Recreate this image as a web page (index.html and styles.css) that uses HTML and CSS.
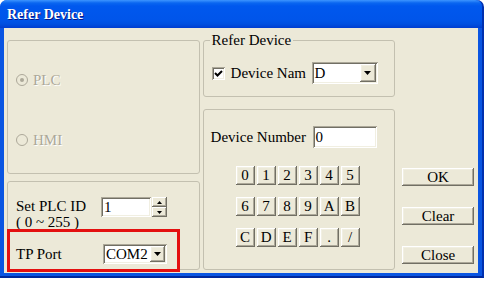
FILE: index.html
```html
<!DOCTYPE html>
<html lang="en">
<head>
    <meta charset="UTF-8">
    <title>Refer Device</title>
    <link rel="stylesheet" href="styles.css">
</head>
<body>
    <div class="window">
        <div class="titlebar">Refer Device</div>
        <div class="client">
            <div class="col col-left">
                <div class="group target-group">
                    <div class="radio-row disabled">
                        <svg class="radio" width="12" height="12" viewBox="0 0 12 12"><circle cx="6" cy="6" r="5.5" fill="#ECE9D8" stroke="#ACA899"/><circle cx="6" cy="6" r="2" fill="#ACA899"/></svg>
                        <span>PLC</span>
                    </div>
                    <div class="radio-row disabled">
                        <svg class="radio" width="12" height="12" viewBox="0 0 12 12"><circle cx="6" cy="6" r="5.5" fill="#ECE9D8" stroke="#ACA899"/></svg>
                        <span>HMI</span>
                    </div>
                </div>
                <div class="group plc-group">
                    <div class="field-row id-row">
                        <div class="label two-line">
                            <div>Set PLC ID</div>
                            <div>( 0 ~ 255 )</div>
                        </div>
                        <div class="edit spin-edit">1</div>
                        <div class="spin">
                            <div class="spin-btn"><svg width="5" height="3" viewBox="0 0 5 3"><path d="M2.5 0 L5 3 L0 3 Z" fill="#000"/></svg></div>
                            <div class="spin-btn"><svg width="5" height="3" viewBox="0 0 5 3"><path d="M0 0 L5 0 L2.5 3 Z" fill="#000"/></svg></div>
                        </div>
                    </div>
                    <div class="field-row port-row">
                        <div class="label port-label">TP Port</div>
                        <div class="combo port-combo">
                            <span class="combo-text">COM2</span>
                            <span class="drop-btn"><svg width="7" height="4" viewBox="0 0 7 4"><path d="M0 0 L7 0 L3.5 4 Z" fill="#000"/></svg></span>
                        </div>
                    </div>
                </div>
            </div>

            <div class="col col-mid">
                <div class="group refer-group">
                    <span class="legend">Refer Device</span>
                    <div class="field-row name-row">
                        <span class="checkbox"><svg width="9" height="9" viewBox="0 0 9 9"><path d="M1 4 L3.5 6.5 L8 2" fill="none" stroke="#000" stroke-width="2"/></svg></span>
                        <span class="label name-label">Device Nam</span>
                        <div class="combo name-combo">
                            <span class="combo-text">D</span>
                            <span class="drop-btn"><svg width="7" height="4" viewBox="0 0 7 4"><path d="M0 0 L7 0 L3.5 4 Z" fill="#000"/></svg></span>
                        </div>
                    </div>
                </div>
                <div class="group number-group">
                    <div class="field-row number-row">
                        <span class="label number-label">Device Number</span>
                        <div class="edit number-edit">0</div>
                    </div>
                    <div class="keypad">
                        <button class="btn key">0</button>
                        <button class="btn key">1</button>
                        <button class="btn key">2</button>
                        <button class="btn key">3</button>
                        <button class="btn key">4</button>
                        <button class="btn key">5</button>
                        <button class="btn key">6</button>
                        <button class="btn key">7</button>
                        <button class="btn key">8</button>
                        <button class="btn key">9</button>
                        <button class="btn key">A</button>
                        <button class="btn key">B</button>
                        <button class="btn key">C</button>
                        <button class="btn key">D</button>
                        <button class="btn key">E</button>
                        <button class="btn key">F</button>
                        <button class="btn key">.</button>
                        <button class="btn key">/</button>
                    </div>
                </div>
            </div>

            <div class="col col-btns">
                <button class="btn action">OK</button>
                <button class="btn action">Clear</button>
                <button class="btn action">Close</button>
            </div>
        </div>
        <!-- annotation box round the TP Port row -->
        <div class="highlight"></div>
    </div>
</body>
</html>
```

FILE: styles.css
```css
body {
    margin: 0;
    background: #fff;
    font-family: "Liberation Serif", "Times New Roman", serif;
    font-size: 15px;
    color: #000;
}
.window {
    position: relative;
    width: 484px;
    height: 278px;
    box-sizing: border-box;
    background: #0A55E2;
    border-right: 2px solid #0030B0;
    border-bottom: 2px solid #00289C;
    border-radius: 7px 7px 0 0;
    display: flex;
    flex-direction: column;
}
.titlebar {
    height: 28px;
    box-sizing: border-box;
    padding: 2px 0 0 7px;
    line-height: 26px;
    font-family: "Liberation Serif", serif;
    font-size: 14px;
    font-weight: bold;
    color: #fff;
    text-shadow: 1px 1px #0A1883;
    border-radius: 7px 7px 0 0;
    background: linear-gradient(to bottom, #3D95FF 0, #0A66F0 3px, #0058EE 6px, #0055EA 70%, #0050E0 24px, #003DD0 28px);
}
.client {
    flex: 1;
    margin: 0 4px 3px 4px;
    padding: 12px 4px 0 3px;
    background: #ECE9D8;
    display: flex;
}

.col {
    display: flex;
    flex-direction: column;
}
.col-left {
    width: 193px;
}
.col-mid {
    width: 193px;
    margin-left: 3px;
}
.col-btns {
    width: 72px;
    margin-left: 7px;
    padding-top: 128px;
}

.group {
    position: relative;
    box-sizing: border-box;
    border: 1px solid #C3C0B0;
    border-radius: 3px;
}
.legend {
    position: absolute;
    top: -9px;
    left: 6px;
    padding: 0 2px;
    line-height: 17px;
    background: #ECE9D8;
}

.target-group {
    height: 134px;
    padding: 29px 0 0 8px;
}
.radio-row {
    height: 20px;
    display: flex;
    align-items: center;
}
.radio-row + .radio-row {
    margin-top: 40px;
}
.radio {
    margin-right: 5px;
}
.disabled {
    color: #ACA899;
    text-shadow: 1px 1px #fff;
}

.plc-group {
    height: 89px;
    margin-top: 7px;
    padding: 15px 0 0 8px;
}
.field-row {
    display: flex;
    align-items: center;
}
.id-row {
    height: 20px;
    align-items: flex-start;
}
.two-line {
    width: 85px;
    margin-top: 1px;
    line-height: 16px;
}
.port-row {
    margin-top: 27px;
    height: 20px;
}
.port-label {
    width: 87px;
    line-height: 20px;
}

.edit,
.combo {
    box-sizing: border-box;
    background: #fff;
    box-shadow: inset 1px 1px #ACA899, inset -1px -1px #fff, inset 2px 2px #716F64, inset -2px -2px #F1EFE2;
}
.edit {
    padding-left: 3px;
}
.spin-edit {
    width: 50px;
    height: 20px;
    line-height: 20px;
}
.spin {
    width: 15px;
    height: 20px;
    margin-left: 1px;
    display: flex;
    flex-direction: column;
}
.spin-btn {
    flex: 1;
    display: flex;
    align-items: center;
    justify-content: center;
    background: #ECE9D8;
    box-shadow: inset -1px -1px #716F64, inset 1px 1px #fff, inset -2px -2px #ACA899;
}
.spin-btn svg {
    display: block;
}

.combo {
    display: flex;
    align-items: stretch;
    padding: 2px;
}
.combo-text {
    flex: 1;
    padding-left: 1px;
}
.drop-btn {
    display: flex;
    align-items: center;
    justify-content: center;
    background: #ECE9D8;
    box-shadow: inset -1px -1px #716F64, inset 1px 1px #fff, inset -2px -2px #ACA899, inset 2px 2px #F1EFE2;
}
.port-combo {
    width: 64px;
    height: 20px;
    line-height: 16px;
}
.port-combo .drop-btn {
    width: 15px;
}

.refer-group {
    height: 57px;
    padding: 21px 0 0 8px;
}
.name-row {
    height: 22px;
}
.checkbox {
    width: 13px;
    height: 13px;
    box-sizing: border-box;
    display: flex;
    align-items: center;
    justify-content: center;
    background: #fff;
    box-shadow: inset 1px 1px #ACA899, inset -1px -1px #fff, inset 2px 2px #716F64, inset -2px -2px #F1EFE2;
}
.name-label {
    width: 81px;
    margin-left: 6px;
}
.name-combo {
    width: 66px;
    height: 22px;
    line-height: 18px;
}
.name-combo .drop-btn {
    width: 16px;
}

.number-group {
    height: 161px;
    margin-top: 12px;
    padding: 16px 0 0 7px;
}
.number-row {
    height: 22px;
}
.number-label {
    width: 102px;
    line-height: 22px;
}
.number-edit {
    width: 64px;
    height: 22px;
    line-height: 22px;
}

.btn {
    margin: 0;
    padding: 0;
    border: 0;
    font: inherit;
    color: #000;
    background: #ECE9D8;
    box-shadow: inset -1px -1px #716F64, inset 1px 1px #fff, inset -2px -2px #ACA899, inset 2px 2px #F1EFE2;
}
.keypad {
    margin: 18px 0 0 25px;
    display: grid;
    grid-template-columns: repeat(6, 19px);
    grid-auto-rows: 19px;
    column-gap: 2px;
    row-gap: 12px;
}
.key {
    line-height: 19px;
}
.action {
    height: 18px;
    line-height: 18px;
}
.action + .action {
    margin-top: 21px;
}

.highlight {
    position: absolute;
    left: 7px;
    top: 229px;
    width: 173px;
    height: 43px;
    box-sizing: border-box;
    border: 3px solid #E41010;
}
```
